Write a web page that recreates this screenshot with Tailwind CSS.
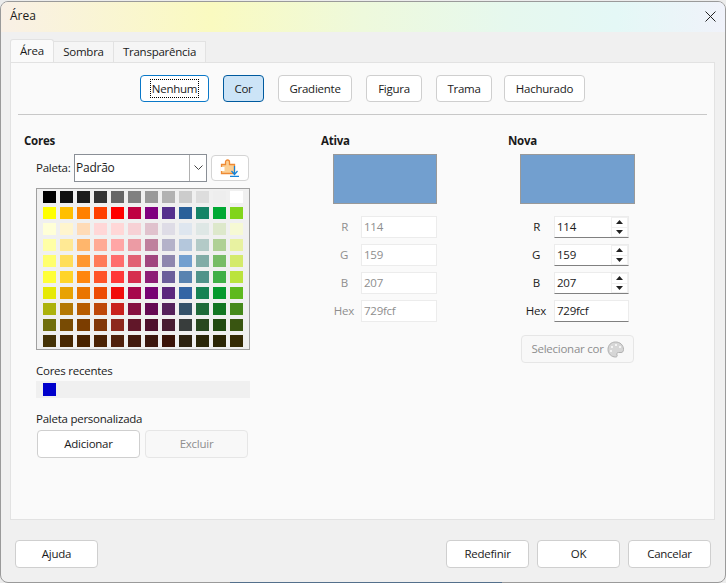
<!DOCTYPE html>
<html lang="pt">
<head>
    <meta charset="UTF-8">
    <title>Área</title>
    <script src="https://cdn.jsdelivr.net/npm/@tailwindcss/browser@4"></script>
</head>
<body class="relative w-[726px] h-[583px] overflow-hidden bg-[#ececec] font-['Open_Sans',sans-serif] text-[11.5px] tracking-[-0.25px] text-[#1a1a1a]">
    <div class="w-[726px] h-[582px] mt-px rounded-lg border border-[#9a9a9a] bg-[#f0f0f0] flex flex-col overflow-hidden">
        <!-- title bar -->
        <div class="h-[30px] shrink-0 flex items-center justify-between pl-[9px] pr-[9px] pb-[2px] bg-[linear-gradient(90deg,#f9f0e6_0%,#fafac0_29%,#eef9dc_50%,#e6f8ee_70%,#e4f8f6_85%,#f0f2fa_100%)]">
            <span class="text-[12px] tracking-normal">Área</span>
            <svg class="w-[11px] h-[11px]" viewBox="0 0 11 11" fill="none" stroke="#222" stroke-width="1"><path d="M.5.5l10 10M10.5.5l-10 10"/></svg>
        </div>

        <!-- tabs -->
        <div class="flex items-end h-[30px] pl-[9px] shrink-0">
            <div class="w-[44px] h-[23px] flex items-center justify-center bg-[#fafafa] border border-b-0 border-[#e2e2e2] rounded-t-[3px]">Área</div>
            <div class="w-[60px] h-[21px] flex items-center justify-center bg-[#f5f5f5] border border-l-0 border-b-0 border-[#e2e2e2]">Sombra</div>
            <div class="w-[92px] h-[21px] flex items-center justify-center bg-[#f5f5f5] border border-l-0 border-b-0 border-[#e2e2e2]">Transparência</div>
        </div>

        <!-- panel -->
        <div class="ml-[9px] w-[705px] h-[458px] shrink-0 bg-[#fafafa] border border-[#e2e2e2] flex flex-col">
            <div class="flex pt-[12px] pl-[129px] h-[39px]">
                <button class="w-[69px] h-[27px] bg-white border-[1.5px] border-[#0a78c8] rounded-[4px] flex items-center justify-center mr-[14px]"><span class="outline-dotted outline-1 outline-black leading-[17px] px-px">Nenhum</span></button>
                <button class="w-[41px] h-[27px] bg-[#cce4f7] border border-[#005a9e] rounded-[4px] mr-[14px]">Cor</button>
                <button class="w-[74px] h-[27px] bg-white border border-[#cfcfcf] rounded-[4px] mr-[14px]">Gradiente</button>
                <button class="w-[56px] h-[27px] bg-white border border-[#cfcfcf] rounded-[4px] mr-[14px]">Figura</button>
                <button class="w-[56px] h-[27px] bg-white border border-[#cfcfcf] rounded-[4px] mr-[12px]">Trama</button>
                <button class="w-[81px] h-[27px] bg-white border border-[#cfcfcf] rounded-[4px]">Hachurado</button>
            </div>
            <div class="ml-[7px] mr-[7px] mt-[12px] h-px bg-[#c8c8c8]"></div>

            <div class="flex pl-[13px] pt-[18px]">
                <!-- left column -->
                <div class="w-[297px] shrink-0">
                    <div class="font-bold leading-[16px]">Cores</div>
                    <div class="flex items-center h-[28px] mt-[5px] pl-[12px]">
                        <span class="w-[38px]">Paleta:</span>
                        <div class="w-[133px] h-[28px] flex bg-white border border-[#8a8f96]">
                            <span class="flex-1 pl-[1px] leading-[26px] text-[12px]">Padrão</span>
                            <span class="w-[17px] border-l border-[#b0b0b0] flex items-center justify-center">
                                <svg class="w-[9px] h-[6px]" viewBox="0 0 9 6" fill="none" stroke="#444"><path d="M.5.5l4 4 4-4"/></svg>
                            </span>
                        </div>
                        <button class="ml-[4px] w-[38px] h-[26px] bg-white border border-[#d4d4d4] rounded-[4px] flex items-center justify-center">
                            <svg class="w-[20px] h-[18px]" viewBox="0 0 20 18">
                                <path d="M1.500 5.500h4V3a2 2 0 0 1 4 0v2.500h5v9h-13z" fill="#fbcf94" stroke="#ee8a34" stroke-width="1.300"/>
                                <rect x="0.500" y="8" width="4" height="4" fill="#fff"/>
                                <path d="M14.500 7v8.500M11.500 12l3 3.500 3-3.500M10 17.300h9" fill="none" stroke="#1683d8" stroke-width="1.200"/>
                            </svg>
                        </button>
                    </div>
                    <div id="palette" class="ml-[12px] mt-[6px] w-[214px] h-[162px] bg-[#f0f0f0] border border-[#a0a0a0] pl-[6px] pt-[2px] grid grid-cols-[repeat(12,17px)] auto-rows-[16px]"></div>

                    <div class="ml-[12px] mt-[13px] leading-[16px]">Cores recentes</div>
                    <div class="ml-[12px] mt-[2px] w-[214px] h-[17px] bg-[#f0f0f0] pl-[7px] pt-[2px]"><div class="w-[13px] h-[13px] bg-[#0000cc]"></div></div>
                    <div class="ml-[12px] mt-[13px] leading-[16px]">Paleta personalizada</div>
                    <div class="flex ml-[13px] mt-[3px] gap-[5px]">
                        <button class="w-[103px] h-[28px] bg-white border border-[#cfcfcf] rounded-[4px]">Adicionar</button>
                        <button class="w-[103px] h-[28px] bg-[#f8f8f8] border border-[#e6e6e6] rounded-[4px] text-[#8e8e8e]">Excluir</button>
                    </div>
                </div>

                <!-- Ativa -->
                <div class="w-[187px] shrink-0">
                    <div class="font-bold leading-[16px]">Ativa</div>
                    <div class="ml-[12px] mt-[5px] w-[104px] h-[50px] bg-[#729fcf] border border-[#999]"></div>
                    <div class="mt-[12px] flex flex-col gap-[6px] text-[#8e8e8e]">
                        <div class="flex items-center h-[22px]"><span class="w-[40px] text-right pr-[13px]">R</span><div class="w-[76px] h-[22px] bg-white border border-[#ececec] pl-[2px] leading-[20px]">114</div></div>
                        <div class="flex items-center h-[22px]"><span class="w-[40px] text-right pr-[13px]">G</span><div class="w-[76px] h-[22px] bg-white border border-[#ececec] pl-[2px] leading-[20px]">159</div></div>
                        <div class="flex items-center h-[22px]"><span class="w-[40px] text-right pr-[13px]">B</span><div class="w-[76px] h-[22px] bg-white border border-[#ececec] pl-[2px] leading-[20px]">207</div></div>
                        <div class="flex items-center h-[22px]"><span class="w-[40px] text-right pr-[7px]">Hex</span><div class="w-[76px] h-[22px] bg-white border border-[#ececec] pl-[2px] leading-[20px]">729fcf</div></div>
                    </div>
                </div>

                <!-- Nova -->
                <div class="w-[190px] shrink-0">
                    <div class="font-bold leading-[16px]">Nova</div>
                    <div class="ml-[12px] mt-[5px] w-[115px] h-[50px] bg-[#729fcf] border border-[#999]"></div>
                    <div class="mt-[12px] flex flex-col gap-[6px]">
                        <div class="flex items-center h-[22px]"><span class="w-[46px] text-right pr-[14px]">R</span>
                            <div class="w-[75px] h-[22px] bg-white border border-[#ececec] border-b-[#808080] pl-[2px] leading-[20px] flex justify-between"><span>114</span>
                                <div class="w-[17px] bg-[#f0f0f0] flex flex-col items-center gap-px p-px">
                                    <div class="w-[15px] h-[9px] bg-white flex items-center justify-center"><svg class="w-[7px] h-[4px]" viewBox="0 0 7 4"><path d="M3.500 0L7 4H0z" fill="#222"/></svg></div>
                                    <div class="w-[15px] h-[9px] bg-white flex items-center justify-center"><svg class="w-[7px] h-[4px]" viewBox="0 0 7 4"><path d="M0 0h7L3.500 4z" fill="#222"/></svg></div>
                                </div>
                            </div>
                        </div>
                        <div class="flex items-center h-[22px]"><span class="w-[46px] text-right pr-[14px]">G</span>
                            <div class="w-[75px] h-[22px] bg-white border border-[#ececec] border-b-[#808080] pl-[2px] leading-[20px] flex justify-between"><span>159</span>
                                <div class="w-[17px] bg-[#f0f0f0] flex flex-col items-center gap-px p-px">
                                    <div class="w-[15px] h-[9px] bg-white flex items-center justify-center"><svg class="w-[7px] h-[4px]" viewBox="0 0 7 4"><path d="M3.500 0L7 4H0z" fill="#222"/></svg></div>
                                    <div class="w-[15px] h-[9px] bg-white flex items-center justify-center"><svg class="w-[7px] h-[4px]" viewBox="0 0 7 4"><path d="M0 0h7L3.500 4z" fill="#222"/></svg></div>
                                </div>
                            </div>
                        </div>
                        <div class="flex items-center h-[22px]"><span class="w-[46px] text-right pr-[14px]">B</span>
                            <div class="w-[75px] h-[22px] bg-white border border-[#ececec] border-b-[#808080] pl-[2px] leading-[20px] flex justify-between"><span>207</span>
                                <div class="w-[17px] bg-[#f0f0f0] flex flex-col items-center gap-px p-px">
                                    <div class="w-[15px] h-[9px] bg-white flex items-center justify-center"><svg class="w-[7px] h-[4px]" viewBox="0 0 7 4"><path d="M3.500 0L7 4H0z" fill="#222"/></svg></div>
                                    <div class="w-[15px] h-[9px] bg-white flex items-center justify-center"><svg class="w-[7px] h-[4px]" viewBox="0 0 7 4"><path d="M0 0h7L3.500 4z" fill="#222"/></svg></div>
                                </div>
                            </div>
                        </div>
                        <div class="flex items-center h-[22px]"><span class="w-[46px] text-right pr-[8px]">Hex</span>
                            <div class="w-[75px] h-[22px] bg-white border border-[#ececec] border-b-[#808080] pl-[2px] leading-[20px]">729fcf</div>
                        </div>
                    </div>
                    <button class="ml-[13px] mt-[13px] w-[113px] h-[28px] bg-[#f8f8f8] border border-[#e6e6e6] rounded-[4px] text-[#8e8e8e] flex items-center justify-center gap-[3px]">
                        <span>Selecionar cor</span>
                        <svg class="w-[17px] h-[17px]" viewBox="0 0 17 17">
                            <path d="M8.500 1C4 1 1 4.200 1 8.500S4.500 16 8.500 16c1.500 0 2-1 1.500-2-.6-1.300 0-2.500 1.500-2.500H14c1.500 0 2.500-1 2.500-3C16.500 4 13 1 8.500 1z" fill="#d6d6d6" stroke="#b0b0b0"/>
                            <circle cx="5" cy="6" r="1.100" fill="#fafafa"/><circle cx="9" cy="4" r="1.100" fill="#fafafa"/><circle cx="4" cy="10" r="1.100" fill="#fafafa"/><circle cx="13" cy="6" r="1.100" fill="#fafafa"/>
                        </svg>
                    </button>
                </div>
            </div>
        </div>

        <!-- footer -->
        <div class="flex pl-[14px] pr-[14px] pt-[20px]">
            <button class="w-[83px] h-[28px] bg-white border border-[#cfcfcf] rounded-[4px]">Ajuda</button>
            <div class="ml-auto flex gap-[8px]">
                <button class="w-[83px] h-[28px] bg-white border border-[#cfcfcf] rounded-[4px]">Redefinir</button>
                <button class="w-[83px] h-[28px] bg-white border border-[#cfcfcf] rounded-[4px]">OK</button>
                <button class="w-[83px] h-[28px] bg-white border border-[#cfcfcf] rounded-[4px]">Cancelar</button>
            </div>
        </div>
    </div>
    <!-- sliver of the window behind the dialog -->
    <div class="absolute left-[230px] bottom-0 w-[272px] h-px bg-[#54708c]"></div>

    <script>
        // LibreOffice standard palette, row by row
        const colors = [
            '000000','111111','1c1c1c','333333','666666','808080','999999','b2b2b2','cccccc','dddddd','eeeeee','ffffff',
            'ffff00','ffbf00','ff8000','ff4000','ff0000','bf0041','800080','55308d','2a6099','158466','00a933','81d41a',
            'ffffd7','fff5ce','ffdbb6','ffd7d7','ffd7d7','f7d1d5','e0c2cd','dedce6','dee6ef','dee7e5','dde8cb','f6f9d4',
            'ffffa6','ffe994','ffb66c','ffaa95','ffa6a6','ec9ba4','bf819e','b4b2c9','b4c7dc','b3cac7','afd095','e8f2a1',
            'ffff6d','ffde59','ff972f','ff7b59','ff6d6d','e16173','a1467e','8e86ae','729fcf','81aca6','77bc65','d4ea6b',
            'ffff38','ffd428','ff860d','ff5429','ff3838','d62e4e','8d1d75','6b5e9b','5983b0','50938a','3faf46','bbe33d',
            'e6e905','e8a202','ea7500','ed4c05','f10d0c','a7074b','780373','5b277d','3465a4','168253','069a2e','5eb91e',
            'acb20c','b47804','b85c00','be480a','c9211e','861141','650953','55215b','355269','1e6a39','127622','468a1a',
            '706e0c','784b04','7b3d00','813709','8d281e','611729','4e102d','481d32','383d3c','28471f','224b12','395511',
            '443205','472702','492300','4b2204','50200c','41190d','3b160e','3a1308','2c2210','2a2608','2b2605','352b05'
        ];
        const palette = document.getElementById('palette');
        colors.forEach(c => {
            const cell = document.createElement('div');
            cell.className = 'w-[13px] h-[12px]';
            cell.style.background = '#' + c;
            palette.appendChild(cell);
        });
    </script>
</body>
</html>
